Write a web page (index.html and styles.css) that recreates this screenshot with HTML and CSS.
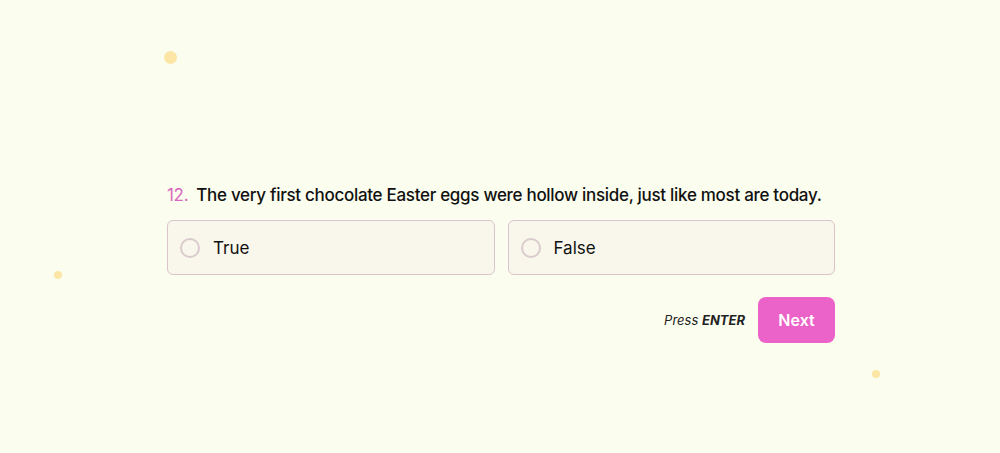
FILE: index.html
```html
<!DOCTYPE html>
<html>
<head>
<meta charset="utf-8">
<link rel="stylesheet" href="styles.css">
</head>
<body>
<div class="page">
  <span class="dot dot-a"></span>
  <span class="dot dot-b"></span>
  <span class="dot dot-c"></span>
  <main class="quiz">
    <h2 class="question"><span class="num">12.</span><span>The very first chocolate Easter eggs were hollow inside, just like most are today.</span></h2>
    <div class="options">
      <label class="option"><span class="radio"></span><span>True</span></label>
      <label class="option"><span class="radio"></span><span>False</span></label>
    </div>
    <div class="actions">
      <span class="hint">Press <b>ENTER</b></span>
      <button class="next">Next</button>
    </div>
  </main>
</div>
</body>
</html>
```
FILE: styles.css
```css
html, body {
  margin: 0;
  padding: 0;
  background: #fbfdee;
}
body {
  font-family: "Inter", "Noto Sans", sans-serif;
  color: #111;
}
.page {
  position: relative;
  width: 1000px;
  height: 453px;
  overflow: hidden;
  display: flex;
}
.dot {
  position: absolute;
  border-radius: 50%;
  background: #fbe6a6;
}
.dot-a { left: 164px; top: 51px; width: 13px; height: 13px; }
.dot-b { left: 54px; top: 271px; width: 8px; height: 8px; }
.dot-c { left: 872px; top: 370px; width: 8px; height: 8px; }
.quiz {
  width: 668px;
  margin-left: 167px;
  margin-top: 183px;
  display: flex;
  flex-direction: column;
}
.question {
  margin: 0;
  font-size: 17px;
  font-weight: 500;
  line-height: 24px;
  display: flex;
  gap: 8px;
  letter-spacing: -0.3px;
}
.num { color: #d966bd; font-weight: 400; }
.options {
  margin-top: 13px;
  display: grid;
  grid-template-columns: 1fr 1fr;
  gap: 13px;
}
.option {
  height: 55px;
  box-sizing: border-box;
  border: 1.5px solid #d9c3cc;
  border-radius: 6px;
  background: #f9f6ec;
  display: flex;
  align-items: center;
  padding-left: 12px;
  gap: 13px;
  font-size: 17px;
  color: #111;
}
.radio {
  width: 20px;
  height: 20px;
  box-sizing: border-box;
  border: 2px solid #dacbcc;
  border-radius: 50%;
}
.actions {
  margin-top: 22px;
  display: flex;
  justify-content: flex-end;
  align-items: center;
  gap: 13px;
}
.hint {
  font-style: italic;
  font-size: 13px;
  color: #222;
}
.hint b { font-weight: 700; }
.next {
  width: 77px;
  height: 46px;
  border: none;
  border-radius: 8px;
  background: #eb62c8;
  color: #fff;
  font-family: inherit;
  font-size: 16px;
  font-weight: 600;
}
```
